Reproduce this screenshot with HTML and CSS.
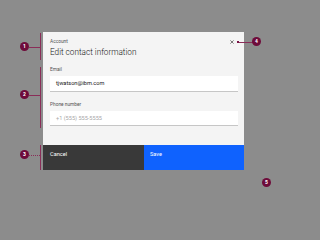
FILE: index.html
```html
<!DOCTYPE html>
<html lang="en">
<head>
<meta charset="utf-8">
<title>Modal anatomy</title>
<link rel="stylesheet" href="styles.css">
</head>
<body>
<div class="stage">
  <div class="modal">
    <div class="modal-body">
      <div class="header">
        <div class="label">Account</div>
        <div class="title">Edit contact information</div>
        <button class="close" aria-label="Close">
          <svg viewBox="0 0 10 10" width="4" height="4"><path d="M1 1L9 9M9 1L1 9" stroke="#333333" stroke-width="1.6" fill="none"/></svg>
        </button>
      </div>
      <div class="field">
        <div class="field-label">Email</div>
        <div class="input">tjwatson@ibm.com</div>
      </div>
      <div class="field second">
        <div class="field-label">Phone number</div>
        <div class="input placeholder">+1 (555) 555-5555</div>
      </div>
    </div>
    <div class="footer">
      <div class="btn secondary">Cancel</div>
      <div class="btn primary">Save</div>
    </div>
  </div>

  <div class="bracket b1"></div>
  <div class="conn c1"></div>
  <div class="badge n1">1</div>

  <div class="bracket b2"></div>
  <div class="conn c2"></div>
  <div class="badge n2">2</div>

  <div class="bracket b3"></div>
  <div class="conn dotted c3"></div>
  <div class="badge n3">3</div>

  <div class="conn c4"></div>
  <div class="dot d4"></div>
  <div class="badge n4">4</div>

  <div class="badge n5">5</div>
</div>
</body>
</html>
```

FILE: styles.css
```css
* { box-sizing: border-box; }
html, body {
  margin: 0;
  padding: 0;
  width: 288px;
  height: 203px;
  overflow: hidden;
  background: #8c8c8c;
  font-family: Roboto, "Liberation Sans", sans-serif;
}
.stage {
  position: relative;
  width: 288px;
  height: 203px;
  padding: 32px 0 0 43px;
}
.modal {
  width: 201px;
  height: 138px;
  background: #f4f4f4;
  display: flex;
  flex-direction: column;
}
.modal-body {
  flex: 1;
  padding: 7px 6px 0 7px;
}
.header {
  position: relative;
}
.label {
  font-size: 4.8px;
  line-height: 6px;
  color: #525252;
}
.title {
  margin-top: 2px;
  font-size: 8.2px;
  font-weight: 300;
  line-height: 11px;
  color: #161616;
}
.close {
  position: absolute;
  top: 0;
  right: 2px;
  width: 8px;
  height: 6px;
  padding: 0;
  border: 0;
  background: transparent;
  display: flex;
  align-items: center;
  justify-content: center;
}
.field {
  margin-top: 9px;
}
.field.second {
  margin-top: 10px;
}
.field-label {
  font-size: 4.8px;
  line-height: 6px;
  color: #525252;
}
.input {
  margin-top: 3px;
  height: 16px;
  background: #ffffff;
  border-bottom: 1px solid #c6c6c6;
  font-size: 5.6px;
  line-height: 15px;
  padding-left: 6px;
  color: #161616;
}
.input.placeholder {
  color: #a8a8a8;
  height: 15px;
  line-height: 14px;
}
.footer {
  height: 25px;
  display: flex;
}
.btn {
  flex: 1;
  font-size: 5.6px;
  line-height: 7px;
  padding: 6px 0 0 7px;
  color: #ffffff;
}
.btn.secondary { background: #393939; }
.btn.primary { background: #0f62fe; padding-left: 6px; }

.badge {
  position: absolute;
  width: 9px;
  height: 9px;
  border-radius: 50%;
  background: #6e0b3a;
  color: #ffffff;
  font-size: 5px;
  font-weight: 700;
  line-height: 9px;
  text-align: center;
}
.bracket {
  position: absolute;
  left: 40px;
  width: 1px;
  background: #8a2d58;
}
.conn {
  position: absolute;
  height: 1px;
  background: #8a2d58;
}
.conn.dotted {
  background: transparent;
  border-top: 1px dotted #8a2d58;
}
.dot {
  position: absolute;
  width: 2px;
  height: 2px;
  background: #7a1446;
}
.n1 { left: 20px; top: 42px; }
.b1 { top: 33px; height: 27px; }
.c1 { left: 29px; top: 47px; width: 11px; }

.n2 { left: 20px; top: 90px; }
.b2 { top: 67px; height: 61px; }
.c2 { left: 29px; top: 95px; width: 11px; }

.n3 { left: 20px; top: 150px; }
.b3 { top: 145px; height: 25px; }
.c3 { left: 29px; top: 155px; width: 11px; }

.n4 { left: 252px; top: 37px; }
.c4 { left: 237px; top: 42px; width: 16px; }
.d4 { left: 237px; top: 41px; }

.n5 { left: 262px; top: 178px; }
```
